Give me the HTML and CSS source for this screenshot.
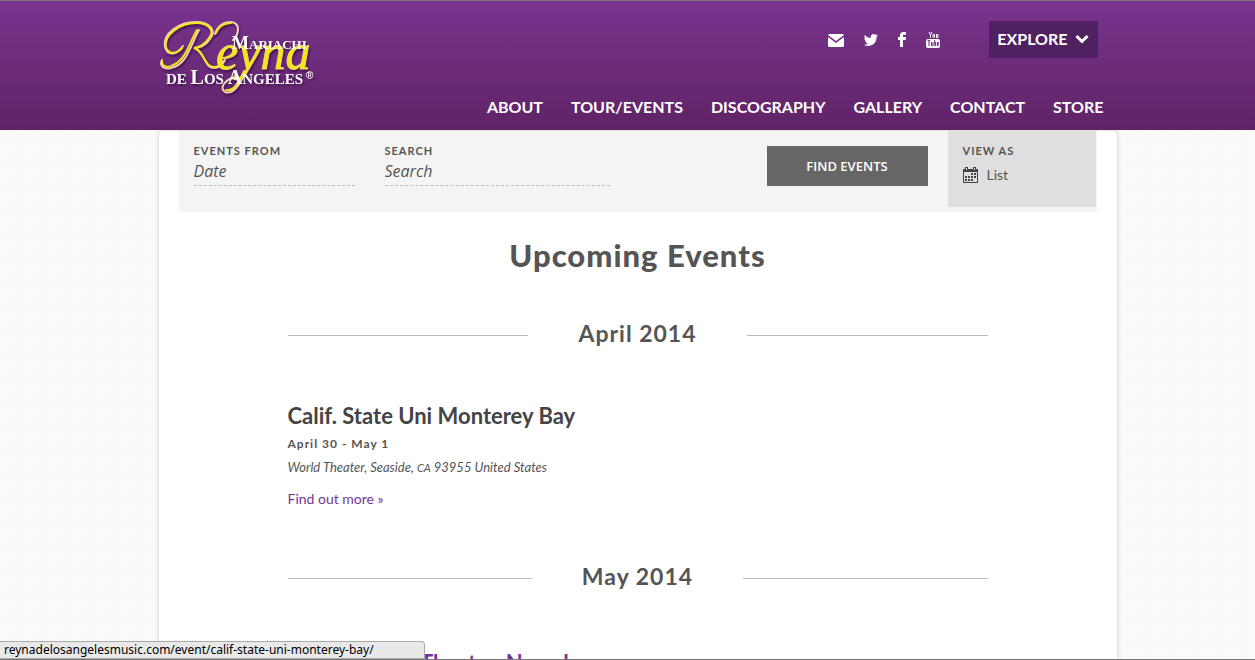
FILE: index.html
```html
<!DOCTYPE html>
<html lang="en">
<head>
<meta charset="utf-8">
<title>Upcoming Events - Mariachi Reyna de Los Angeles</title>
<link rel="stylesheet" href="styles.css">
</head>
<body>
<header class="site-header">
  <div class="header-inner">
    <a class="logo" href="#" aria-label="Mariachi Reyna de Los Angeles">
      <svg width="160" height="78" viewBox="0 0 160 78">
        <g class="logo-shadow">
          <path class="swash-light" d="M4 41C1 47 6 51 13 49C29 46 32 27 41 11M25 27C17 38 9 36 7 28C4 14 22 3 38 3C52 3 59 12 52 20C48 26 42 29 36 29C46 31 46 49 56 49C61 49 65 45 67 41M57 15C59 7 66 3 73 3C82 4 82 14 75 21M79 57C66 61 61 69 67 73C74 76 82 67 88 52"/>
          <path class="swash" d="M4 42C4 48 10 49 15 46C28 41 31 24 39 11M24 29C18 36 10 35 8 28C6 15 23 4 38 4C51 4 57 12 51 19C47 25 42 28 36 29C46 31 46 48 56 48C60 48 63 45 65 42M58 14C60 8 66 4 73 4M68 71C75 73 81 64 86 52"/>
          <text class="script" x="58" y="50">eyna</text>
          <text class="caps caps-small" x="74" y="30"><tspan class="initial">M</tspan>ARIACHI</text>
          <text class="caps" x="8" y="65"><tspan>DE </tspan><tspan class="initial">L</tspan>OS <tspan class="initial">A</tspan>NGELES</text>
          <text class="mark" x="148" y="60">®</text>
        </g>
      </svg>
    </a>
    <div class="header-side">
      <div class="header-tools">
        <nav class="social" aria-label="Social links">
          <a href="#" aria-label="Email"><svg width="16" height="14" viewBox="0 0 16 14"><path d="M1 1h14l1 1-8 6-8-6zM0 4l8 6 8-6v9l-1 1H1l-1-1z"/></svg></a>
          <a href="#" aria-label="Twitter"><svg width="14" height="14" viewBox="0 0 14 12"><path d="M14 1.500l-1.400 1.600C12.700 9 8 12 4.300 12 2.700 12 1.200 11.500 0 10.700c1.500.1 2.900-.3 4-1.200-1.200 0-2.300-.8-2.700-2h1.300C1.200 7.200.3 6 .3 4.600l1.300.4C.4 4 0 2.500.8 1.100 2.200 2.800 4.300 3.900 6.700 4 6.300 1.900 7.700 0 9.700 0c.8 0 1.500.3 2.100.9l1.800-.7-1.200 1.600z"/></svg></a>
          <a href="#" aria-label="Facebook"><svg width="8" height="15" viewBox="0 0 8 15"><path d="M2 15V8H0V5h2V3.500C2 1 3.500 0 5.300 0H8v2.700H6C5.300 2.700 5 3 5 3.700V5h3l-.4 3H5v7z"/></svg></a>
          <a href="#" aria-label="YouTube"><svg width="14" height="17" viewBox="0 0 14 17"><path class="yt-line" d="M3 1l1.500 3v3M6 1L4.500 4M7 3.500v2.700h1.500V3.500zM10.500 3v3.500H12V3"/><rect y="8" width="14" height="9" rx="2"/><path class="yt-cut" d="M1.500 9.700h3M3 9.700v5.500M5.500 11v3.700H7V11M8.700 9v5.700h1V11.500h-1M12.700 14.500h-1.200v-3h1.200v1.500h-1"/></svg></a>
        </nav>
        <button class="explore" type="button">EXPLORE <svg width="14" height="10" viewBox="0 0 14 10"><path d="M1.500 2L7 7.500 12.500 2"/></svg></button>
      </div>
      <nav class="main-nav" aria-label="Main">
        <a href="#">ABOUT</a><a href="#">TOUR/EVENTS</a><a href="#">DISCOGRAPHY</a><a href="#">GALLERY</a><a href="#">CONTACT</a><a href="#">STORE</a>
      </nav>
    </div>
  </div>
</header>
<main class="page">
  <form class="filter-bar">
    <div class="field field-date"><label for="date">EVENTS FROM</label><input id="date" type="text" placeholder="Date"></div>
    <div class="field field-search"><label for="search">SEARCH</label><input id="search" type="text" placeholder="Search"></div>
    <button class="find" type="submit">FIND EVENTS</button>
    <div class="view-as">
      <span class="view-label">VIEW AS</span>
      <a class="view-option" href="#"><svg width="15" height="16" viewBox="0 0 15 16" shape-rendering="crispEdges"><path d="M0 2h2V0h3v2h5V0h3v2h2v14H0zM1 5v10h13V5zM3 1v2h1V1zM11 1v2h1V1z" fill-rule="evenodd"/><path d="M8 6h2v2H8zM11 6h2v2h-2zM2 9h2v2H2zM5 9h2v2H5zM8 9h2v2H8zM11 9h2v2h-2zM2 12h2v2H2zM5 12h2v2H5zM8 12h2v2H8z"/></svg>List</a>
    </div>
  </form>
  <h1>Upcoming Events</h1>
  <div class="events">
    <h2 class="month">April 2014</h2>
    <article class="event">
      <h3><a href="#">Calif. State Uni Monterey Bay</a></h3>
      <p class="when">April 30 - May 1</p>
      <p class="venue">World Theater, Seaside, <abbr>CA</abbr> 93955 United States</p>
      <a class="more" href="#">Find out more »</a>
    </article>
    <h2 class="month">May 2014</h2>
    <article class="event">
      <h3><a class="violet" href="#">Smith Center Theater, Nevada</a></h3>
    </article>
  </div>
</main>
<div class="status">reynadelosangelesmusic.com/event/calif-state-uni-monterey-bay/</div>
</body>
</html>
```
FILE: styles.css
```css
* { box-sizing: border-box; }
html { height: 100%; overflow: hidden; }
body {
  height: 100vh;
  margin: 0;
  overflow: hidden;
  display: flex;
  flex-direction: column;
  border-top: 1px solid #777;
  border-bottom: 1px solid #777;
  background: #fff linear-gradient(135deg, #fff 50%, #f8f8f8 50%) 0 0 / 3px 3px;
  color: #555;
  font-family: Lato, "Liberation Sans", sans-serif;
}
a { color: inherit; text-decoration: none; }
.site-header {
  position: relative;
  z-index: 1;
  flex: none;
  padding-left: 20px;
  background: linear-gradient(#79348f, #5f2365);
}
.header-inner {
  display: flex;
  justify-content: space-between;
  max-width: 960px;
  min-height: 129px;
  margin: 0 auto;
}
.logo { padding-top: 18px; }
.logo svg { display: block; overflow: visible; }
.logo-shadow { filter: drop-shadow(1px 2px 1px #40154c); }
.swash, .swash-light { fill: none; stroke-linecap: round; }
.swash-light { stroke: #f3d3b5; stroke-width: 2; }
.swash { stroke: #f5e61a; stroke-width: 2; }
.script { fill: #f5e61a; stroke: #e9c8a0; stroke-width: 1; paint-order: stroke; font: italic 50px "Liberation Serif", serif; }
.caps { fill: #fff; font: bold 15px "Liberation Serif", serif; }
.initial { font-size: 20px; }
.caps-small { font-size: 13px; }
.caps-small .initial { font-size: 18px; }
.mark { fill: #fff; font: bold 10px "Liberation Sans", sans-serif; }
.header-side {
  display: flex;
  flex-direction: column;
  justify-content: space-between;
  align-items: flex-end;
  padding: 20px 14px 13px 0;
}
.header-tools { display: flex; align-items: center; gap: 49px; padding-right: 6px; }
.social { display: flex; align-items: center; gap: 20px; fill: #fff; }
.social svg { display: block; }
.yt-line { fill: none; stroke: #fff; }
.yt-cut { fill: none; stroke: #6d2c82; }
.explore {
  display: flex;
  align-items: center;
  gap: 7px;
  height: 37px;
  padding: 0 9px 2px 8px;
  border: 0;
  background: #4f2160;
  color: #fff;
  font: bold 16px Lato, sans-serif;
}
.explore svg { fill: none; stroke: #fff; stroke-width: 3; }
.main-nav { display: flex; gap: 28px; color: #fff; font-size: 16px; line-height: 20px; font-weight: bold; }
.page {
  flex: 1 0 auto;
  align-self: center;
  width: 100%;
  max-width: 960px;
  margin-left: 20px;
  padding: 0 20px;
  border: 1px solid #e4e4e4;
  border-radius: 5px 5px 0 0;
  background: #fff;
  box-shadow: 0 0 5px #ddd;
}
.filter-bar {
  display: flex;
  align-items: flex-start;
  height: 81px;
  padding-left: 15px;
  background: #f4f4f4;
}
.field label, .view-label { display: block; font-size: 11px; line-height: 14px; font-weight: bold; letter-spacing: 1px; }
.field { padding-top: 13px; }
.field-date { width: 161px; margin-right: 30px; }
.field-search { width: 225px; }
.field input {
  width: 100%;
  height: 28px;
  padding: 0 0 2px;
  border: 0;
  border-bottom: 1px dashed #bbb;
  background: none;
  font: italic 16px "Open Sans", sans-serif;
}
.field input::placeholder { color: #555; opacity: 1; }
.find {
  width: 161px;
  height: 40px;
  margin: 15px 20px 0 auto;
  border: 0;
  background: #666;
  color: #fff;
  font: 600 13px "Open Sans", sans-serif;
}
.view-as { width: 148px; height: 76px; margin-right: 1px; padding: 13px 15px; background: #dfdfdf; }
.view-option { display: flex; align-items: center; gap: 9px; padding-top: 7px; font-size: 14px; line-height: 20px; fill: #444; }
h1 { margin: 23px 0 0; font-size: 31px; line-height: 40px; font-weight: 900; text-align: center; letter-spacing: 1px; }
.events { max-width: 700px; margin: 0 auto; }
.month {
  display: flex;
  align-items: center;
  gap: 50px;
  margin: 43px 0 54px;
  font-size: 23px;
  line-height: 30px;
  font-weight: bold;
  letter-spacing: 1px;
}
.month::before, .month::after { content: ""; flex: 1; margin-top: 4px; border-top: 1px solid #bbb; }
.event { padding-bottom: 9px; }
.event h3 { margin: 0; color: #444; font-size: 22px; line-height: 28px; }
.event h3 .violet, .more { color: #753596; }
.event h3 .violet { display: inline-block; padding-top: 4px; }
.event p { margin: 0; }
.when { padding-top: 4px; font-size: 12px; line-height: 20px; font-weight: bold; letter-spacing: 1px; }
.event .venue { padding-top: 3px; font-size: 13px; line-height: 20px; font-style: italic; }
abbr { font-size: 11px; }
.more { display: inline-block; padding-top: 11px; font-size: 14px; line-height: 20px; }
.status {
  position: absolute;
  z-index: 2;
  left: 0;
  bottom: 1px;
  width: 425px;
  padding: 0 4px;
  border: 1px solid #aaa;
  border-left: 0;
  border-radius: 0 4px 0 0;
  background: #e9e9e9;
  color: #000;
  font: 12px/16px "Noto Sans", sans-serif;
}
```
